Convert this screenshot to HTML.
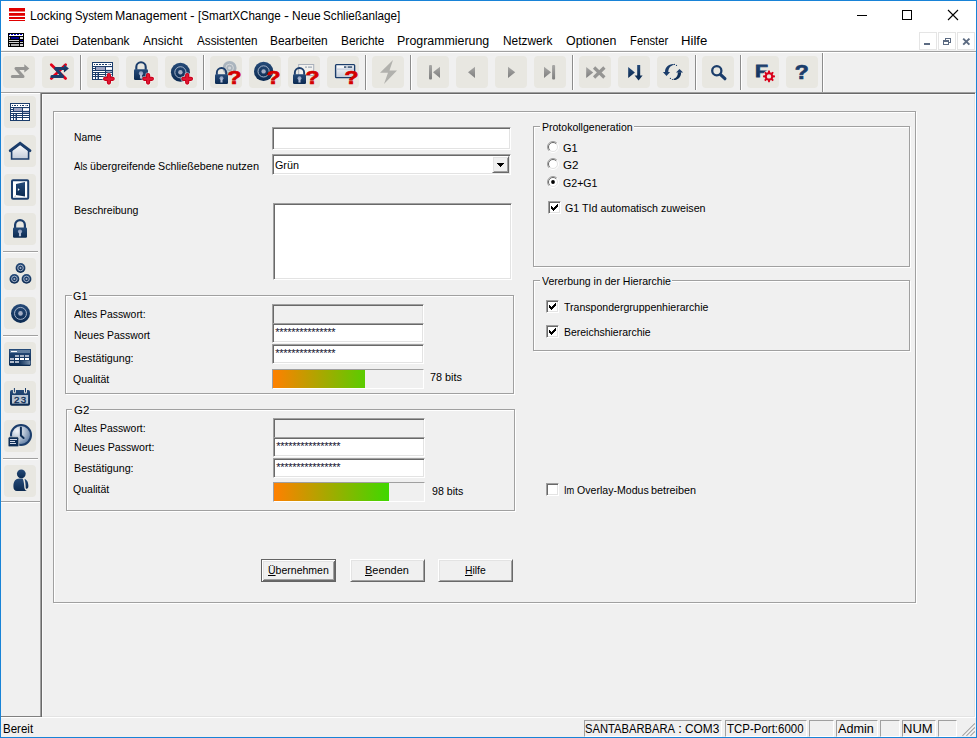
<!DOCTYPE html><html lang="de"><head><meta charset="utf-8"><title>Locking System Management</title><style>
*{box-sizing:border-box;margin:0;padding:0}
html,body{width:977px;height:738px;overflow:hidden;background:#f0f0f0}
body{position:relative;font:11px "Liberation Sans",sans-serif;color:#000}
.a{position:absolute}
.tx{position:absolute;white-space:nowrap;font:11px "Liberation Sans",sans-serif;line-height:14px;height:14px;transform-origin:0 0;color:#000}
.tx.s12{font-size:12px;line-height:15px;height:15px}
.tx u{text-decoration:underline;text-underline-offset:1px}
.win{position:absolute;left:0;top:0;width:977px;height:738px;border:1px solid #1883d7;pointer-events:none;z-index:50}
.white{background:#fff}
.tb{position:absolute;width:32px;height:32px;border-radius:4px;background:#e8e7e1}
.tb svg{position:absolute;left:0;top:0;width:32px;height:32px;overflow:visible}
.vsep{position:absolute;width:2px;border-left:1px solid #8c8c8c;border-right:1px solid #fff}
.hsep{position:absolute;height:2px;border-top:1px solid #a0a0a0;border-bottom:1px solid #fff}
.sunk{position:absolute;border:1px solid;border-color:#a0a0a0 #fff #fff #a0a0a0;box-shadow:inset 1px 1px 0 #696969,inset -1px -1px 0 #e3e3e3;background:#fff}
.sunk.dis{background:#f0f0f0}
.etch{position:absolute;border:1px solid #a0a0a0;box-shadow:1px 1px 0 #fff,inset 1px 1px 0 #fff}
.gl{position:absolute;background:#f0f0f0;height:4px}
.btn{position:absolute;background:#f0f0f0;border:1px solid;border-color:#fff #696969 #696969 #fff;box-shadow:inset 1px 1px 0 #e3e3e3,inset -1px -1px 0 #a0a0a0}
.btn.def{border-color:#646464;box-shadow:inset 1px 1px 0 #fff,inset -1px -1px 0 #696969,inset 2px 2px 0 #e3e3e3,inset -2px -2px 0 #a0a0a0}
.cb{position:absolute;width:13px;height:13px}
.rb{position:absolute;width:12px;height:12px}
.pane{position:absolute;top:720px;height:17px;border:1px solid;border-color:#a0a0a0 #fff #fff #a0a0a0}
.pw{position:absolute;font:11px "Liberation Sans",sans-serif;line-height:11px;white-space:nowrap;letter-spacing:-0.28px;color:#101030}
</style></head><body>
<svg width="0" height="0" style="position:absolute"><defs>
<linearGradient id="gb" x1="0" y1="0" x2="0" y2="1"><stop offset="0" stop-color="#264b79"/><stop offset="1" stop-color="#0b2a51"/></linearGradient>
<linearGradient id="gr" x1="0" y1="0" x2="0" y2="1"><stop offset="0" stop-color="#e8112d"/><stop offset="1" stop-color="#b80014"/></linearGradient>
<linearGradient id="gl" x1="0" y1="0" x2="0" y2="1"><stop offset="0" stop-color="#ffffff"/><stop offset="1" stop-color="#c3ccd9"/></linearGradient>
<linearGradient id="gg" x1="0" y1="0" x2="0" y2="1"><stop offset="0" stop-color="#a8a8a6"/><stop offset="1" stop-color="#7e7e7e"/></linearGradient>
<radialGradient id="gc" cx="0.3" cy="0.3" r="0.8"><stop offset="0" stop-color="#f4f7fa"/><stop offset="0.45" stop-color="#b9c6d6"/><stop offset="1" stop-color="#56759f"/></radialGradient>
<linearGradient id="gh" x1="0" y1="0" x2="1" y2="0"><stop offset="0" stop-color="#7f97b3" stop-opacity="0"/><stop offset="1" stop-color="#8ea3bc" stop-opacity=".85"/></linearGradient>
</defs></svg>
<div class="a white" style="left:0;top:0;width:977px;height:51px"></div>
<div class="a" style="left:0;top:50px;width:977px;height:1px;background:#f1f1f1"></div>
<div class="a" style="left:0;top:51px;width:977px;height:1px;background:#a0a0a0"></div>
<div class="a" style="left:0;top:52px;width:977px;height:1px;background:#fff"></div>
<svg class="a" style="left:9px;top:8px" width="16" height="13" viewBox="0 0 16 13"><rect x="0" y="0" width="16" height="3.5" fill="#e00000"/><rect x="0" y="5" width="16" height="2.8" fill="#e00000"/><rect x="0" y="9" width="16" height="2" fill="#e00000"/><rect x="0" y="12" width="16" height="1" fill="#e00000"/></svg>
<svg class="a" style="left:8px;top:33px" width="16" height="14" viewBox="0 0 16 14" shape-rendering="crispEdges"><rect width="16" height="14" fill="#000"/>
<rect x="1" y="1" width="14" height="2" fill="#fff"/><path d="M1,1h1v1h-1z M3,1h2v1h-2z M6,1h2v1h-2z M9,1h2v1h-2z M12,1h2v1h-2z" fill="#0000c0"/><rect x="1" y="2" width="14" height="1" fill="#0000a0" opacity=".0"/>
<rect x="1" y="4" width="1" height="2" fill="#c0c0c0"/><rect x="3" y="4" width="8" height="2" fill="#000090"/><rect x="12" y="4" width="3" height="2" fill="#e0e0e0"/>
<rect x="1" y="7" width="10" height="1" fill="#d0d0d0"/><rect x="12" y="7" width="3" height="1" fill="#000090"/>
<rect x="1" y="9" width="10" height="1" fill="#d0d0d0"/><rect x="12" y="9" width="3" height="1" fill="#d0d0d0"/>
<rect x="1" y="11" width="1" height="2" fill="#c0c0c0"/><rect x="3" y="11" width="8" height="2" fill="#b0b0b0"/><rect x="12" y="11" width="3" height="2" fill="#d0d0d0"/></svg>
<div class="a" style="left:857px;top:15px;width:10px;height:1px;background:#000"></div>
<div class="a" style="left:902px;top:10px;width:10px;height:10px;border:1px solid #000"></div>
<svg class="a" style="left:947px;top:9px" width="12" height="12" viewBox="0 0 12 12"><path d="M1,1 L11,11 M11,1 L1,11" stroke="#000" stroke-width="1.1"/></svg>
<div class="a" style="left:919px;top:32px;width:18px;height:18px;border:1px solid #e5e5e5;background:#fff"></div>
<div class="a" style="left:938px;top:32px;width:18px;height:18px;border:1px solid #e5e5e5;background:#fff"></div>
<div class="a" style="left:957px;top:32px;width:18px;height:18px;border:1px solid #e5e5e5;background:#fff"></div>
<div class="a" style="left:924px;top:43px;width:6px;height:2px;background:#5c6b82"></div>
<svg class="a" style="left:942px;top:37px" width="10" height="9" viewBox="0 0 10 9" shape-rendering="crispEdges"><path d="M3.5,3 V1 H8.5 V5 H6.5" fill="none" stroke="#5c6b82" stroke-width="1"/><rect x="3" y="0.5" width="6" height="1" fill="#5c6b82"/><rect x="1.5" y="3.5" width="5" height="4" fill="#fff" stroke="#5c6b82" stroke-width="1"/><rect x="1" y="3" width="6" height="1.6" fill="#5c6b82"/></svg>
<svg class="a" style="left:962px;top:37px" width="9" height="9" viewBox="0 0 9 9"><path d="M1.2,1.6 L7.4,7.6 M7.4,1.6 L1.2,7.6" stroke="#5c6b82" stroke-width="2"/></svg>
<div class="tb" style="left:3px;top:56px"><svg viewBox="0 0 32 32"><path d="M9.3,20.4 H20 L13,12.4 H22" fill="none" stroke="#969694" stroke-width="3" stroke-linecap="round" stroke-linejoin="round"/><path d="M21.3,8.3 L26.3,12.4 L21.3,16.5Z" fill="#969694"/></svg></div>
<div class="tb" style="left:42px;top:56px"><svg viewBox="0 0 32 32"><path d="M9.3,8.8 L23.6,22.4 M23.6,8.8 L9.3,22.4" stroke="#e2001a" stroke-width="2.8" stroke-linecap="round"/><path d="M9.9,20.4 H20.6 L13.6,12.4 H22.6" fill="none" stroke="#1b3d6b" stroke-width="3" stroke-linecap="round" stroke-linejoin="round"/><path d="M21.900000000000002,8.3 L26.900000000000002,12.4 L21.900000000000002,16.5Z" fill="url(#gb)"/></svg></div>
<div class="tb" style="left:87px;top:56px"><svg viewBox="0 0 32 32"><g shape-rendering="crispEdges"><rect x="5" y="6" width="21" height="18" fill="#1b3d6b"/><rect x="6.00" y="7" width="19.00" height="3" rx=".8" fill="#fff"/><rect x="7.20" y="8" width="1.00" height="1" fill="#1b3d6b"/><rect x="9.00" y="8" width="1.90" height="1" fill="#1b3d6b"/><rect x="12.00" y="8" width="1.90" height="1" fill="#1b3d6b"/><rect x="15.00" y="8" width="1.90" height="1" fill="#1b3d6b"/><rect x="18.00" y="8" width="1.90" height="1" fill="#1b3d6b"/><rect x="21.00" y="8" width="1.90" height="1" fill="#9aa5c0"/><rect x="23.00" y="8" width="1.00" height="1" fill="#1b3d6b"/><rect x="6.00" y="11" width="2.00" height="1" fill="#fff"/><rect x="6.00" y="13" width="2.00" height="1" fill="#fff"/><rect x="9.00" y="11" width="9.00" height="3" fill="#9ea5c3"/><rect x="19.00" y="11" width="6.00" height="3" fill="#e3e6f0"/><rect x="19.00" y="12" width="6.00" height="1" fill="#fff"/><rect x="6.00" y="15" width="12.00" height="1" fill="#fff"/><rect x="19.00" y="15" width="6.00" height="1" fill="#a3abc6"/><rect x="6.00" y="17" width="2.00" height="1" fill="#fff"/><rect x="9.00" y="17" width="1.00" height="1" fill="#fff"/><rect x="10.00" y="17" width="1.00" height="1" fill="#9aa5c0"/><rect x="12.00" y="17" width="6.00" height="1" fill="#fff"/><rect x="19.00" y="17" width="6.00" height="1" fill="#fff"/><rect x="6.00" y="19" width="2.00" height="1" fill="#fff"/><rect x="9.00" y="19" width="1.00" height="1" fill="#fff"/><rect x="10.00" y="19" width="1.00" height="1" fill="#9aa5c0"/><rect x="12.00" y="19" width="6.00" height="1" fill="#fff"/><rect x="19.00" y="19" width="6.00" height="1" fill="#fff"/><rect x="6.00" y="21" width="2.00" height="2" fill="#fff"/><rect x="9.00" y="21" width="1.00" height="2" fill="#fff"/><rect x="10.00" y="21" width="1.00" height="2" fill="#9aa5c0"/><rect x="12.00" y="21" width="6.00" height="2" fill="#fff"/><rect x="19.00" y="21" width="6.00" height="2" fill="#fff"/></g><path d="M18.099999999999998,22.8 H25.7 M21.9,19.0 V26.6" stroke="#fff" stroke-opacity=".5" stroke-width="5.6" stroke-linecap="round"/><path d="M18.099999999999998,22.8 H25.7 M21.9,19.0 V26.6" stroke="#c80019" stroke-width="4.2" stroke-linecap="round"/><path d="M18.099999999999998,22.8 H25.7 M21.9,19.0 V26.6" stroke="#df1632" stroke-width="2.2" stroke-linecap="round"/></svg></div>
<div class="tb" style="left:126px;top:56px"><svg viewBox="0 0 32 32"><path d="M10.30,13.7 V10.95 A4.70,4.70 0 0 1 19.70,10.95 V13.7" fill="none" stroke="#1b3d6b" stroke-width="2.1"/><rect x="8" y="13.2" width="14" height="10.8" rx="1.2" fill="url(#gb)"/><circle cx="15.0" cy="17.52" r="2.16" fill="#97a6c4"/><path d="M14.1,17.52 L13.9,22.40 H16.1 L15.9,17.52Z" fill="#b4bfd6"/><path d="M18.3,22.8 H25.900000000000002 M22.1,19.0 V26.6" stroke="#fff" stroke-opacity=".5" stroke-width="5.6" stroke-linecap="round"/><path d="M18.3,22.8 H25.900000000000002 M22.1,19.0 V26.6" stroke="#c80019" stroke-width="4.2" stroke-linecap="round"/><path d="M18.3,22.8 H25.900000000000002 M22.1,19.0 V26.6" stroke="#df1632" stroke-width="2.2" stroke-linecap="round"/></svg></div>
<div class="tb" style="left:165px;top:56px"><svg viewBox="0 0 32 32"><g opacity="1"><circle cx="15.4" cy="16.3" r="9.5" fill="url(#gb)"/><circle cx="15.4" cy="16.3" r="5.6" fill="none" stroke="#b4bfd3" stroke-width=".9"/><circle cx="15.4" cy="16.3" r="2.2" fill="#a5afc6"/></g><path d="M18.4,22.8 H26.0 M22.2,19.0 V26.6" stroke="#fff" stroke-opacity=".5" stroke-width="5.6" stroke-linecap="round"/><path d="M18.4,22.8 H26.0 M22.2,19.0 V26.6" stroke="#c80019" stroke-width="4.2" stroke-linecap="round"/><path d="M18.4,22.8 H26.0 M22.2,19.0 V26.6" stroke="#df1632" stroke-width="2.2" stroke-linecap="round"/></svg></div>
<div class="tb" style="left:210px;top:56px"><svg viewBox="0 0 32 32"><g opacity="0.3"><circle cx="19.6" cy="12" r="7" fill="url(#gb)"/><circle cx="19.6" cy="12" r="3.8" fill="none" stroke="#b4bfd3" stroke-width=".9"/><circle cx="19.6" cy="12" r="1.6" fill="#a5afc6"/></g><path d="M6.85,18.8 V16.60 A4.65,4.65 0 0 1 16.15,16.60 V18.8" fill="none" stroke="#1b3d6b" stroke-width="1.9"/><rect x="5" y="18.3" width="13" height="9.7" rx="1.2" fill="url(#gb)"/><circle cx="11.5" cy="22.18" r="1.94" fill="#97a6c4"/><path d="M10.6,22.18 L10.4,26.40 H12.6 L12.4,22.18Z" fill="#b4bfd6"/><text x="24.5" y="28" text-anchor="middle" font-family="Liberation Sans,sans-serif" font-weight="bold" font-size="19" fill="#d40000" stroke="#d40000" stroke-width=".7" textLength="14" lengthAdjust="spacingAndGlyphs">?</text></svg></div>
<div class="tb" style="left:249px;top:56px"><svg viewBox="0 0 32 32"><g opacity="1"><circle cx="14.6" cy="15.4" r="9.6" fill="url(#gb)"/><circle cx="14.6" cy="15.4" r="5.6" fill="none" stroke="#b4bfd3" stroke-width=".9"/><circle cx="14.6" cy="15.4" r="2.2" fill="#a5afc6"/></g><text x="24.5" y="28" text-anchor="middle" font-family="Liberation Sans,sans-serif" font-weight="bold" font-size="19" fill="#d40000" stroke="#d40000" stroke-width=".7" textLength="14" lengthAdjust="spacingAndGlyphs">?</text></svg></div>
<div class="tb" style="left:288px;top:56px"><svg viewBox="0 0 32 32"><g opacity=".45"><rect x="10.7" y="8.5" width="15" height="11" fill="#fff" stroke="#5d6f8f" stroke-width="1"/><rect x="17" y="10.6" width="2" height="1" fill="#1b3d6b"/><rect x="20" y="10.6" width="4" height="1" fill="#1b3d6b"/></g><path d="M6.85,18.8 V16.60 A4.65,4.65 0 0 1 16.15,16.60 V18.8" fill="none" stroke="#1b3d6b" stroke-width="1.9"/><rect x="5" y="18.3" width="13" height="9.7" rx="1.2" fill="url(#gb)"/><circle cx="11.5" cy="22.18" r="1.94" fill="#97a6c4"/><path d="M10.6,22.18 L10.4,26.40 H12.6 L12.4,22.18Z" fill="#b4bfd6"/><text x="24.5" y="28" text-anchor="middle" font-family="Liberation Sans,sans-serif" font-weight="bold" font-size="19" fill="#d40000" stroke="#d40000" stroke-width=".7" textLength="14" lengthAdjust="spacingAndGlyphs">?</text></svg></div>
<div class="tb" style="left:327px;top:56px"><svg viewBox="0 0 32 32"><rect x="8.6" y="8.6" width="19" height="13" rx=".8" fill="url(#gl)" stroke="#1b3d6b" stroke-width="1.4"/><rect x="9.3" y="12.6" width="17.6" height="1" fill="#b9c2d6"/><rect x="17" y="10.4" width="2.4" height="1.3" fill="#0f2f57"/><rect x="20.6" y="10.4" width="4.6" height="1.3" fill="#0f2f57"/><text x="24.5" y="28" text-anchor="middle" font-family="Liberation Sans,sans-serif" font-weight="bold" font-size="19" fill="#d40000" stroke="#d40000" stroke-width=".7" textLength="14" lengthAdjust="spacingAndGlyphs">?</text></svg></div>
<div class="tb" style="left:372px;top:56px"><svg viewBox="0 0 32 32"><path d="M21,4 L8,16.7 H16 L12,28 L25,14.6 H17.5Z" fill="#b1b1ad"/></svg></div>
<div class="tb" style="left:417px;top:56px"><svg viewBox="0 0 32 32"><rect x="12" y="9" width="3" height="14.6" rx="1" fill="url(#gg)"/><path d="M16,16.3 L23,10.7 V22Z" fill="url(#gg)"/></svg></div>
<div class="tb" style="left:456px;top:56px"><svg viewBox="0 0 32 32"><path d="M12,16.3 L19,10.7 V22Z" fill="url(#gg)"/></svg></div>
<div class="tb" style="left:495px;top:56px"><svg viewBox="0 0 32 32"><path d="M20.2,16.3 L13,10.7 V22Z" fill="url(#gg)"/></svg></div>
<div class="tb" style="left:534px;top:56px"><svg viewBox="0 0 32 32"><path d="M17.1,16.3 L10,10.7 V22Z" fill="url(#gg)"/><rect x="18.1" y="9" width="3" height="14.6" rx="1" fill="url(#gg)"/></svg></div>
<div class="tb" style="left:579px;top:56px"><svg viewBox="0 0 32 32"><path d="M14.2,16.5 L7.2,11 V22Z" fill="url(#gg)"/><path d="M15.1,11.5 L25.4,21.5 M25.4,11.5 L15.1,21.5" stroke="#959593" stroke-width="3.2"/></svg></div>
<div class="tb" style="left:618px;top:56px"><svg viewBox="0 0 32 32"><path d="M16.9,16.5 L10.2,11 V22Z" fill="url(#gb)"/><rect x="19.2" y="9" width="3" height="12" fill="url(#gb)"/><path d="M16.6,19.6 H24.6 L20.6,24.4Z" fill="#0f2f57"/></svg></div>
<div class="tb" style="left:657px;top:56px"><svg viewBox="0 0 32 32"><path d="M8,16.5 C7.8,11.4 11,8 16.4,7.9 L16.8,9.1 C13.2,9.8 11.2,12.6 11.3,16.5Z" fill="#1b3d6b"/><path d="M5.9,16.1 H13.1 L9.5,20Z" fill="#1b3d6b"/><path d="M24.1,16.2 C24.2,21 21.2,23.9 16.8,24 L16.4,22.9 C19.6,22.2 20.9,19.6 20.9,16.2Z" fill="#0f2f57"/><path d="M19,16.6 H26.1 L22.5,12.9Z" fill="#1b3d6b"/><circle cx="17.4" cy="8.4" r=".6" fill="#1b3d6b"/><circle cx="19.5" cy="9.4" r=".6" fill="#1b3d6b"/><circle cx="13.4" cy="22.4" r=".6" fill="#1b3d6b"/><circle cx="15.4" cy="23.5" r=".6" fill="#1b3d6b"/></svg></div>
<div class="tb" style="left:702px;top:56px"><svg viewBox="0 0 32 32"><circle cx="14.8" cy="14.7" r="4.6" fill="none" stroke="#1b3d6b" stroke-width="2.3"/><path d="M18.6,18.6 L22.9,22.7" stroke="#1b3d6b" stroke-width="3.2" stroke-linecap="round"/></svg></div>
<div class="tb" style="left:747px;top:56px"><svg viewBox="0 0 32 32"><text x="8.1" y="21.3" font-family="Liberation Sans,sans-serif" font-weight="bold" font-size="17.4" fill="url(#gb)" stroke="#1b3d6b" stroke-width=".8" textLength="13" lengthAdjust="spacingAndGlyphs">F</text><circle cx="22" cy="20.4" r="6.3" fill="#e8e7e1"/><path d="M27.95,19.60 L27.95,21.20 L26.16,21.50 L25.72,22.56 L26.77,24.04 L25.64,25.17 L24.16,24.12 L23.10,24.56 L22.80,26.35 L21.20,26.35 L20.90,24.56 L19.84,24.12 L18.36,25.17 L17.23,24.04 L18.28,22.56 L17.84,21.50 L16.05,21.20 L16.05,19.60 L17.84,19.30 L18.28,18.24 L17.23,16.76 L18.36,15.63 L19.84,16.68 L20.90,16.24 L21.20,14.45 L22.80,14.45 L23.10,16.24 L24.16,16.68 L25.64,15.63 L26.77,16.76 L25.72,18.24 L26.16,19.30Z M24.2,20.4 A2.2,2.2 0 1 0 19.8,20.4 A2.2,2.2 0 1 0 24.2,20.4Z" fill="#d9001a" fill-rule="evenodd"/></svg></div>
<div class="tb" style="left:786px;top:56px"><svg viewBox="0 0 32 32"><text x="15.8" y="23" text-anchor="middle" font-family="Liberation Sans,sans-serif" font-weight="bold" font-size="19.6" fill="#1b3d6b" stroke="#1b3d6b" stroke-width=".7" textLength="14" lengthAdjust="spacingAndGlyphs">?</text></svg></div>
<div class="vsep" style="left:80px;top:55px;height:35px"></div>
<div class="vsep" style="left:203px;top:55px;height:35px"></div>
<div class="vsep" style="left:365px;top:55px;height:35px"></div>
<div class="vsep" style="left:410px;top:55px;height:35px"></div>
<div class="vsep" style="left:572px;top:55px;height:35px"></div>
<div class="vsep" style="left:695px;top:55px;height:35px"></div>
<div class="vsep" style="left:740px;top:55px;height:35px"></div>
<div class="vsep" style="left:822px;top:53px;height:39px"></div>
<div class="a" style="left:0;top:92px;width:977px;height:1px;background:#a0a0a0"></div>
<div class="a" style="left:0;top:93px;width:41px;height:1px;background:#fff"></div>
<div class="tb" style="left:4px;top:96px"><svg viewBox="0 0 32 32"><g shape-rendering="crispEdges"><rect x="6" y="7" width="20" height="18" fill="#1b3d6b"/><rect x="6.95" y="8" width="18.05" height="3" rx=".8" fill="#fff"/><rect x="8.09" y="9" width="0.95" height="1" fill="#1b3d6b"/><rect x="9.80" y="9" width="1.80" height="1" fill="#1b3d6b"/><rect x="12.65" y="9" width="1.80" height="1" fill="#1b3d6b"/><rect x="15.50" y="9" width="1.80" height="1" fill="#1b3d6b"/><rect x="18.35" y="9" width="1.80" height="1" fill="#1b3d6b"/><rect x="21.20" y="9" width="1.80" height="1" fill="#9aa5c0"/><rect x="23.10" y="9" width="0.95" height="1" fill="#1b3d6b"/><rect x="6.95" y="12" width="1.90" height="1" fill="#fff"/><rect x="6.95" y="14" width="1.90" height="1" fill="#fff"/><rect x="9.80" y="12" width="8.55" height="3" fill="#9ea5c3"/><rect x="19.30" y="12" width="5.70" height="3" fill="#e3e6f0"/><rect x="19.30" y="13" width="5.70" height="1" fill="#fff"/><rect x="6.95" y="16" width="11.40" height="1" fill="#fff"/><rect x="19.30" y="16" width="5.70" height="1" fill="#a3abc6"/><rect x="6.95" y="18" width="1.90" height="1" fill="#fff"/><rect x="9.80" y="18" width="0.95" height="1" fill="#fff"/><rect x="10.75" y="18" width="0.95" height="1" fill="#9aa5c0"/><rect x="12.65" y="18" width="5.70" height="1" fill="#fff"/><rect x="19.30" y="18" width="5.70" height="1" fill="#fff"/><rect x="6.95" y="20" width="1.90" height="1" fill="#fff"/><rect x="9.80" y="20" width="0.95" height="1" fill="#fff"/><rect x="10.75" y="20" width="0.95" height="1" fill="#9aa5c0"/><rect x="12.65" y="20" width="5.70" height="1" fill="#fff"/><rect x="19.30" y="20" width="5.70" height="1" fill="#fff"/><rect x="6.95" y="22" width="1.90" height="2" fill="#fff"/><rect x="9.80" y="22" width="0.95" height="2" fill="#fff"/><rect x="10.75" y="22" width="0.95" height="2" fill="#9aa5c0"/><rect x="12.65" y="22" width="5.70" height="2" fill="#fff"/><rect x="19.30" y="22" width="5.70" height="2" fill="#fff"/></g></svg></div>
<div class="tb" style="left:4px;top:135px"><svg viewBox="0 0 32 32"><path d="M7.6,15.5 V24 H24.6 V15.5 L16.1,8.6Z" fill="url(#gl)" stroke="#1b3d6b" stroke-width="1.6"/><path d="M6.3,15.6 L16.1,8.3 L25.9,15.6" fill="none" stroke="#1b3d6b" stroke-width="3" stroke-linejoin="miter" stroke-linecap="round"/></svg></div>
<div class="tb" style="left:4px;top:174px"><svg viewBox="0 0 32 32"><rect x="8" y="6.2" width="16.2" height="18.6" rx="1" fill="#fff" stroke="#1b3d6b" stroke-width="2"/><path d="M12,10 L21,8 V22.5 L12,21Z" fill="url(#gb)"/><path d="M13.9,14.2 L15.7,15.6 L13.9,17Z" fill="#fff"/><path d="M9.2,23.6 L12,21 V23.6Z" fill="#c9d0dc"/></svg></div>
<div class="tb" style="left:4px;top:213px"><svg viewBox="0 0 32 32"><path d="M11.10,14.9 V12.00 A4.90,4.90 0 0 1 20.90,12.00 V14.9" fill="none" stroke="#1b3d6b" stroke-width="2.2"/><rect x="9" y="14.4" width="14" height="10.4" rx="1.2" fill="url(#gb)"/><circle cx="16.0" cy="18.56" r="2.08" fill="#97a6c4"/><path d="M15.1,18.56 L14.9,23.20 H17.1 L16.9,18.56Z" fill="#b4bfd6"/></svg></div>
<div class="tb" style="left:4px;top:258px"><svg viewBox="0 0 32 32"><g opacity="1"><circle cx="16.5" cy="10" r="4.9" fill="url(#gb)"/><circle cx="16.5" cy="10" r="2.8" fill="none" stroke="#b4bfd3" stroke-width=".9"/><circle cx="16.5" cy="10" r="1" fill="#a5afc6"/></g><g opacity="1"><circle cx="10.4" cy="20.9" r="4.9" fill="url(#gb)"/><circle cx="10.4" cy="20.9" r="2.8" fill="none" stroke="#b4bfd3" stroke-width=".9"/><circle cx="10.4" cy="20.9" r="1" fill="#a5afc6"/></g><g opacity="1"><circle cx="22.5" cy="20.9" r="4.9" fill="url(#gb)"/><circle cx="22.5" cy="20.9" r="2.8" fill="none" stroke="#b4bfd3" stroke-width=".9"/><circle cx="22.5" cy="20.9" r="1" fill="#a5afc6"/></g></svg></div>
<div class="tb" style="left:4px;top:297px"><svg viewBox="0 0 32 32"><g opacity="1"><circle cx="16.5" cy="16.4" r="9.5" fill="url(#gb)"/><circle cx="16.5" cy="16.4" r="6" fill="none" stroke="#b4bfd3" stroke-width=".9"/><circle cx="16.5" cy="16.4" r="2.3" fill="#a5afc6"/></g></svg></div>
<div class="tb" style="left:4px;top:342px"><svg viewBox="0 0 32 32"><path d="M5,7 H27 V23 L26,24 H6 L5,23Z" fill="url(#gb)"/><rect x="15" y="18.5" width="11.4" height="4.2" fill="url(#gh)"/><rect x="6" y="8" width="20" height="3" fill="#617e9f"/><rect x="7" y="9" width="6" height="1" fill="#fff" shape-rendering="crispEdges"/><g shape-rendering="crispEdges"><rect x="11" y="13" width="4" height="2" fill="#a9b4c6"/><rect x="16" y="13" width="4" height="2" fill="#a9b4c6"/><rect x="21" y="13" width="4" height="2" fill="#a9b4c6"/><rect x="6" y="16" width="4" height="2" fill="#b4bdcd"/><rect x="11" y="16" width="4" height="2" fill="#fff"/><rect x="16" y="16" width="4" height="2" fill="#fff"/><rect x="21" y="16" width="4" height="2" fill="#fff"/><rect x="6" y="19" width="4" height="2" fill="#b4bdcd"/><rect x="11" y="19" width="4" height="2" fill="#a9b4c6"/></g></svg></div>
<div class="tb" style="left:4px;top:381px"><svg viewBox="0 0 32 32"><rect x="6" y="9" width="20" height="15.8" rx="1.8" fill="url(#gb)"/><rect x="8" y="14" width="16.1" height="8.6" fill="#bac5d2"/><rect x="8.9" y="6.4" width="3" height="6" rx="1.5" fill="#e8e7e1"/><rect x="20" y="6.4" width="3" height="6" rx="1.5" fill="#e8e7e1"/><rect x="9.9" y="7" width="1" height="4.3" fill="#1b3d6b"/><rect x="21" y="7" width="1" height="4.3" fill="#1b3d6b"/><text x="10" y="21.9" font-family="Liberation Sans,sans-serif" font-size="9.7" fill="#0f2f57" stroke="#0f2f57" stroke-width=".35" textLength="12.2" lengthAdjust="spacing">23</text></svg></div>
<div class="tb" style="left:4px;top:420px"><svg viewBox="0 0 32 32"><circle cx="17" cy="15" r="10" fill="url(#gc)" stroke="#1b3d6b" stroke-width="2"/><path d="M16.9,7.6 V15.6 L19.6,18" fill="none" stroke="#0f2f57" stroke-width="2" stroke-linecap="round"/><rect x="4.1" y="16.8" width="10.7" height="10" rx="1.5" fill="#0f2f57" stroke="#e8e7e1" stroke-width=".7"/><path d="M6,19.5 H13 M6,21.5 H11 M6,23.5 H12.2" stroke="#d3dae8" stroke-width="1" shape-rendering="crispEdges"/></svg></div>
<div class="tb" style="left:4px;top:465px"><svg viewBox="0 0 32 32"><circle cx="17.3" cy="8.8" r="4.4" fill="url(#gb)"/><path d="M9.4,21.5 C9.4,16.5 11.5,13.6 15.5,13.6 H18.7 C19.9,16.5 20.2,20.4 20.3,22.4 C20.5,24.4 21.8,25.6 23.2,26 H13 C10.6,26 9.4,24.4 9.4,21.5Z" fill="url(#gb)"/><path d="M20.5,13.9 C23.3,14.6 24.4,17.6 24.4,21 C24.4,22.8 23.6,23.7 22.7,23.7 C22,23.7 21.7,23.2 21.7,22.4 C21.6,19.5 21.4,16.5 20.5,13.9Z" fill="url(#gb)"/></svg></div>
<div class="hsep" style="left:3px;top:251px;width:35px"></div>
<div class="hsep" style="left:3px;top:335px;width:35px"></div>
<div class="hsep" style="left:3px;top:458px;width:35px"></div>
<div class="a" style="left:0;top:501px;width:40px;height:1px;background:#a0a0a0"></div>
<div class="a" style="left:0;top:502px;width:40px;height:1px;background:#fff"></div>
<div class="a" style="left:40px;top:92px;width:936px;height:626px;border:1px solid;border-color:#a0a0a0 #fff #fff #a0a0a0;box-shadow:inset 1px 1px 0 #696969,inset -1px -1px 0 #e3e3e3"></div>
<div class="a" style="left:0;top:716px;width:41px;height:1px;background:#808080"></div>
<div class="a" style="left:0;top:717px;width:41px;height:1px;background:#fff"></div>
<div class="a" style="left:42px;top:94px;width:932px;height:1px;background:#fafafa"></div>
<div class="a" style="left:42px;top:94px;width:1px;height:622px;background:#fafafa"></div>
<div class="etch" style="left:53px;top:111px;width:863px;height:492px"></div>
<div class="sunk" style="left:272px;top:127px;width:239px;height:23px"></div>
<div class="sunk" style="left:272px;top:154px;width:239px;height:21px"></div>
<div class="btn" style="left:492px;top:156px;width:17px;height:17px"></div>
<svg class="a" style="left:497px;top:163px" width="7" height="4" viewBox="0 0 7 4" shape-rendering="crispEdges"><path d="M0,0h7v1h-7z M1,1h5v1h-5z M2,2h3v1h-3z M3,3h1v1h-1z" fill="#000"/></svg>
<div class="sunk" style="left:273px;top:203px;width:239px;height:77px"></div>
<div class="etch" style="left:65px;top:295px;width:449px;height:99px"></div>
<div class="gl" style="left:72px;top:294px;width:17px"></div>
<div class="etch" style="left:66px;top:409px;width:449px;height:102px"></div>
<div class="gl" style="left:72px;top:408px;width:18px"></div>
<div class="etch" style="left:533px;top:126px;width:377px;height:141px"></div>
<div class="gl" style="left:540px;top:125px;width:94px"></div>
<div class="etch" style="left:533px;top:280px;width:377px;height:71px"></div>
<div class="gl" style="left:540px;top:279px;width:132px"></div>
<div class="sunk dis" style="left:272px;top:304px;width:152px;height:21px"></div>
<div class="sunk" style="left:272px;top:323px;width:152px;height:20px"></div>
<div class="sunk" style="left:272px;top:344px;width:152px;height:20px"></div>
<div class="a" style="left:272px;top:369px;width:152px;height:20px;border:1px solid;border-color:#a0a0a0 #fff #fff #a0a0a0"></div>
<div class="a" style="left:273px;top:370px;width:92px;height:18px;background:linear-gradient(90deg,#ff8000,#5acc00)"></div>
<div class="sunk dis" style="left:273px;top:418px;width:152px;height:21px"></div>
<div class="sunk" style="left:273px;top:437px;width:152px;height:20px"></div>
<div class="sunk" style="left:273px;top:458px;width:152px;height:20px"></div>
<div class="a" style="left:273px;top:482px;width:152px;height:20px;border:1px solid;border-color:#a0a0a0 #fff #fff #a0a0a0"></div>
<div class="a" style="left:274px;top:483px;width:115px;height:18px;background:linear-gradient(90deg,#ff8000,#3fd800)"></div>
<span class="pw" style="left:275.3px;top:327px">***************</span>
<span class="pw" style="left:275.3px;top:348px">***************</span>
<span class="pw" style="left:276.3px;top:441px">****************</span>
<span class="pw" style="left:276.3px;top:462px">****************</span>
<svg class="rb" style="left:547px;top:141px" viewBox="0 0 12 12"><circle cx="6" cy="6" r="5" fill="#fff"/><path d="M9.9,2.1 A5.5,5.5 0 0 0 2.1,9.9" fill="none" stroke="#a0a0a0" stroke-width="1"/><path d="M2.1,9.9 A5.5,5.5 0 0 0 9.9,2.1" fill="none" stroke="#fff" stroke-width="1"/><path d="M9.2,2.8 A4.5,4.5 0 0 0 2.8,9.2" fill="none" stroke="#696969" stroke-width="1"/><path d="M2.8,9.2 A4.5,4.5 0 0 0 9.2,2.8" fill="none" stroke="#e3e3e3" stroke-width="1"/></svg>
<svg class="rb" style="left:547px;top:158px" viewBox="0 0 12 12"><circle cx="6" cy="6" r="5" fill="#fff"/><path d="M9.9,2.1 A5.5,5.5 0 0 0 2.1,9.9" fill="none" stroke="#a0a0a0" stroke-width="1"/><path d="M2.1,9.9 A5.5,5.5 0 0 0 9.9,2.1" fill="none" stroke="#fff" stroke-width="1"/><path d="M9.2,2.8 A4.5,4.5 0 0 0 2.8,9.2" fill="none" stroke="#696969" stroke-width="1"/><path d="M2.8,9.2 A4.5,4.5 0 0 0 9.2,2.8" fill="none" stroke="#e3e3e3" stroke-width="1"/></svg>
<svg class="rb" style="left:547px;top:176px" viewBox="0 0 12 12"><circle cx="6" cy="6" r="5" fill="#fff"/><path d="M9.9,2.1 A5.5,5.5 0 0 0 2.1,9.9" fill="none" stroke="#a0a0a0" stroke-width="1"/><path d="M2.1,9.9 A5.5,5.5 0 0 0 9.9,2.1" fill="none" stroke="#fff" stroke-width="1"/><path d="M9.2,2.8 A4.5,4.5 0 0 0 2.8,9.2" fill="none" stroke="#696969" stroke-width="1"/><path d="M2.8,9.2 A4.5,4.5 0 0 0 9.2,2.8" fill="none" stroke="#e3e3e3" stroke-width="1"/><circle cx="6" cy="6" r="1.9" fill="#000"/></svg>
<div class="sunk" style="left:548px;top:201px;width:13px;height:13px"></div>
<svg class="a" style="left:551px;top:204px" width="7" height="7" viewBox="0 0 7 7" shape-rendering="crispEdges"><path d="M0,2v3h1v-3z M1,3v3h1v-3z M2,4v3h1v-3z M3,3v3h1v-3z M4,2v3h1v-3z M5,1v3h1v-3z M6,0v3h1v-3z" fill="#000"/></svg>
<div class="sunk" style="left:546px;top:300px;width:13px;height:13px"></div>
<svg class="a" style="left:549px;top:303px" width="7" height="7" viewBox="0 0 7 7" shape-rendering="crispEdges"><path d="M0,2v3h1v-3z M1,3v3h1v-3z M2,4v3h1v-3z M3,3v3h1v-3z M4,2v3h1v-3z M5,1v3h1v-3z M6,0v3h1v-3z" fill="#000"/></svg>
<div class="sunk" style="left:546px;top:325px;width:13px;height:13px"></div>
<svg class="a" style="left:549px;top:328px" width="7" height="7" viewBox="0 0 7 7" shape-rendering="crispEdges"><path d="M0,2v3h1v-3z M1,3v3h1v-3z M2,4v3h1v-3z M3,3v3h1v-3z M4,2v3h1v-3z M5,1v3h1v-3z M6,0v3h1v-3z" fill="#000"/></svg>
<div class="sunk" style="left:546px;top:483px;width:13px;height:13px"></div>
<div class="btn def" style="left:261px;top:559px;width:75px;height:23px"></div>
<div class="btn" style="left:350px;top:559px;width:75px;height:23px"></div>
<div class="btn" style="left:438px;top:559px;width:75px;height:23px"></div>
<div class="pane" style="left:584px;width:138px"></div>
<div class="pane" style="left:725px;width:82px"></div>
<div class="pane" style="left:809px;width:25px"></div>
<div class="pane" style="left:836px;width:42px"></div>
<div class="pane" style="left:880px;width:20px"></div>
<div class="pane" style="left:902px;width:34px"></div>
<div class="pane" style="left:938px;width:19px"></div>
<svg class="a" style="left:962px;top:723px" width="13" height="13" viewBox="0 0 13 13"><path d="M0.5,13 L13,0.5 M4.5,13 L13,4.5 M8.5,13 L13,8.5" stroke="#a0a0a0" stroke-width="1.2"/><path d="M1.6,13 L13,1.6 M5.6,13 L13,5.6 M9.6,13 L13,9.6" stroke="#fff" stroke-width="0.8"/></svg>
<span class="tx s12" style="left:30.00px;top:9px;transform:scaleX(1.0184);">Locking</span>
<span class="tx s12" style="left:75.00px;top:9px;transform:scaleX(0.9415);">System</span>
<span class="tx s12" style="left:115.00px;top:9px;transform:scaleX(1.0257);">Management</span>
<span class="tx s12" style="left:190.00px;top:9px;transform:scaleX(1.1449);">-</span>
<span class="tx s12" style="left:198.00px;top:9px;transform:scaleX(0.9692);">[SmartXChange</span>
<span class="tx s12" style="left:284.00px;top:9px;transform:scaleX(1.2386);">-</span>
<span class="tx s12" style="left:292.00px;top:9px;transform:scaleX(0.9963);">Neue</span>
<span class="tx s12" style="left:323.00px;top:9px;transform:scaleX(0.9730);">Schließanlage]</span>
<span class="tx s12" style="left:31.00px;top:34px;transform:scaleX(0.9906);">Datei</span>
<span class="tx s12" style="left:72.00px;top:34px;transform:scaleX(0.9908);">Datenbank</span>
<span class="tx s12" style="left:143.00px;top:34px;transform:scaleX(1.0044);">Ansicht</span>
<span class="tx s12" style="left:197.00px;top:34px;transform:scaleX(0.9747);">Assistenten</span>
<span class="tx s12" style="left:270.00px;top:34px;transform:scaleX(0.9951);">Bearbeiten</span>
<span class="tx s12" style="left:341.00px;top:34px;transform:scaleX(0.9860);">Berichte</span>
<span class="tx s12" style="left:397.00px;top:34px;transform:scaleX(1.0324);">Programmierung</span>
<span class="tx s12" style="left:503.00px;top:34px;transform:scaleX(0.9888);">Netzwerk</span>
<span class="tx s12" style="left:566.00px;top:34px;transform:scaleX(1.0325);">Optionen</span>
<span class="tx s12" style="left:630.00px;top:34px;transform:scaleX(0.9401);">Fenster</span>
<span class="tx s12" style="left:681.00px;top:34px;transform:scaleX(1.0960);">Hilfe</span>
<span class="tx s12" style="left:3.00px;top:722px;transform:scaleX(0.9597);">Bereit</span>
<span class="tx s12" style="left:585.00px;top:722px;transform:scaleX(0.9335);">SANTABARBARA</span>
<span class="tx s12" style="left:678.00px;top:722px;transform:scaleX(1.2190);">:</span>
<span class="tx s12" style="left:685.00px;top:722px;transform:scaleX(0.9878);">COM3</span>
<span class="tx s12" style="left:727.00px;top:722px;transform:scaleX(0.9563);">TCP-Port:6000</span>
<span class="tx s12" style="left:838.00px;top:722px;transform:scaleX(1.0526);">Admin</span>
<span class="tx s12" style="left:903.00px;top:722px;transform:scaleX(1.0846);">NUM</span>
<span class="tx" style="left:74.00px;top:130px;transform:scaleX(0.9402);">Name</span>
<span class="tx" style="left:74.00px;top:159px;transform:scaleX(0.8740);">Als</span>
<span class="tx" style="left:90.00px;top:159px;transform:scaleX(0.9650);">übergreifende</span>
<span class="tx" style="left:158.00px;top:159px;transform:scaleX(0.9745);">Schließebene</span>
<span class="tx" style="left:226.00px;top:159px;transform:scaleX(0.9999);">nutzen</span>
<span class="tx" style="left:74.00px;top:203px;transform:scaleX(0.9575);">Beschreibung</span>
<span class="tx" style="left:275.00px;top:158px;transform:scaleX(0.9776);">Grün</span>
<span class="tx" style="left:73.00px;top:289px;transform:scaleX(0.9876);">G1</span>
<span class="tx" style="left:74.00px;top:307px;transform:scaleX(0.9448);">Altes Passwort:</span>
<span class="tx" style="left:74.00px;top:328px;transform:scaleX(0.9491);">Neues Passwort</span>
<span class="tx" style="left:74.00px;top:351px;transform:scaleX(0.9743);">Bestätigung:</span>
<span class="tx" style="left:73.00px;top:372px;transform:scaleX(0.9566);">Qualität</span>
<span class="tx" style="left:430.00px;top:370px;transform:scaleX(0.9844);">78 bits</span>
<span class="tx" style="left:74.00px;top:403px;transform:scaleX(1.0377);">G2</span>
<span class="tx" style="left:74.00px;top:421px;transform:scaleX(0.9448);">Altes Passwort:</span>
<span class="tx" style="left:74.00px;top:440px;transform:scaleX(0.9674);">Neues Passwort:</span>
<span class="tx" style="left:74.00px;top:461px;transform:scaleX(0.9743);">Bestätigung:</span>
<span class="tx" style="left:73.00px;top:482px;transform:scaleX(0.9566);">Qualität</span>
<span class="tx" style="left:432.00px;top:484px;transform:scaleX(0.9653);">98 bits</span>
<span class="tx" style="left:542.00px;top:120px;transform:scaleX(0.9564);">Protokollgeneration</span>
<span class="tx" style="left:563.00px;top:141px;transform:scaleX(1.0026);">G1</span>
<span class="tx" style="left:563.00px;top:158px;transform:scaleX(1.0547);">G2</span>
<span class="tx" style="left:563.00px;top:176px;transform:scaleX(0.9646);">G2+G1</span>
<span class="tx" style="left:565.00px;top:201px;transform:scaleX(0.9713);">G1 TId automatisch zuweisen</span>
<span class="tx" style="left:542.00px;top:274px;transform:scaleX(0.9579);">Vererbung in der Hierarchie</span>
<span class="tx" style="left:564.00px;top:300px;transform:scaleX(0.9588);">Transpondergruppenhierarchie</span>
<span class="tx" style="left:564.00px;top:325px;transform:scaleX(0.9513);">Bereichshierarchie</span>
<span class="tx" style="left:564.00px;top:483px;transform:scaleX(0.8358);">Im</span>
<span class="tx" style="left:577.00px;top:483px;transform:scaleX(0.9613);">Overlay-Modus</span>
<span class="tx" style="left:651.00px;top:483px;transform:scaleX(0.9818);">betreiben</span>
<span class="tx" style="left:268.00px;top:563px;transform:scaleX(0.9553);"><u>Ü</u>bernehmen</span>
<span class="tx" style="left:365.00px;top:563px;transform:scaleX(0.9943);"><u>B</u>eenden</span>
<span class="tx" style="left:465.00px;top:563px;transform:scaleX(0.9414);"><u>H</u>ilfe</span>
<div class="win"></div>
</body></html>
